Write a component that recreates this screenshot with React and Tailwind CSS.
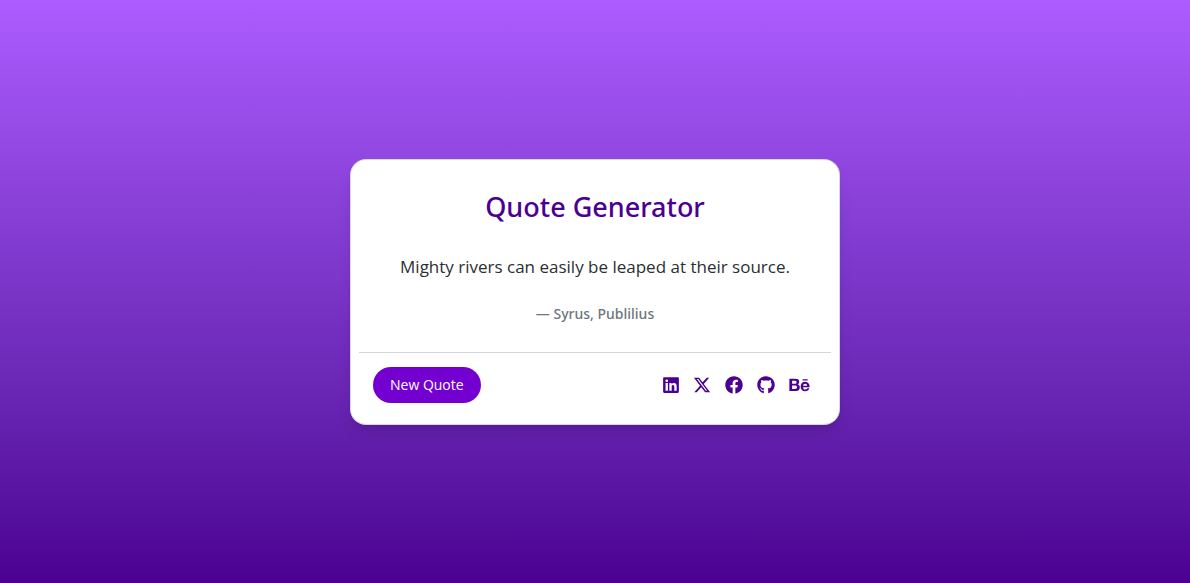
import { FaLinkedin, FaFacebook, FaGithub, FaBehance } from "react-icons/fa";
import { FaXTwitter } from "react-icons/fa6";

const links = [
  { label: "LinkedIn", href: "#linkedin", Icon: FaLinkedin, size: "h-[18px] w-4" },
  { label: "X", href: "#x", Icon: FaXTwitter, size: "h-[18px] w-[18px]" },
  { label: "Facebook", href: "#facebook", Icon: FaFacebook, size: "h-[18px] w-[18px]" },
  { label: "GitHub", href: "#github", Icon: FaGithub, size: "h-[18px] w-[18px]" },
  { label: "Behance", href: "#behance", Icon: FaBehance, size: "h-[18px] w-[21px]" },
];

export default function App() {
  return (
    <main className="flex min-h-screen items-center justify-center bg-linear-to-b from-[#ad5cff] to-[#4b0091] font-['Open_Sans',sans-serif]">
      <section className="w-full max-w-[490px] rounded-2xl border border-black/15 bg-white px-2 pt-7 pb-[21px] shadow-lg">
        <h1 className="text-center font-['Noto_Sans',sans-serif] text-[27px] leading-[38px] font-medium text-[#4b0091]">Quote Generator</h1>
        <blockquote className="mt-6 px-4 text-center">
          <p className="text-[17px] leading-[34px] text-[#2b2f33]">Mighty rivers can easily be leaped at their source.</p>
          <footer className="mt-5 font-['Noto_Sans',sans-serif] text-sm leading-5 font-medium text-[#6c757d]">— Syrus, Publilius</footer>
        </blockquote>
        <div className="mt-7 flex items-center justify-between border-t border-[#d3d6da] px-3.5 pt-3.5">
          <button type="button" className="h-9 rounded-full bg-[#7300d1] px-[17px] text-sm text-white">New Quote</button>
          <nav className="flex items-center gap-3.5 pr-[7px] text-[#4b0091]">
            {links.map(({ label, href, Icon, size }) => (
              <a key={label} href={href} aria-label={label}><Icon className={size} /></a>
            ))}
          </nav>
        </div>
      </section>
    </main>
  );
}
